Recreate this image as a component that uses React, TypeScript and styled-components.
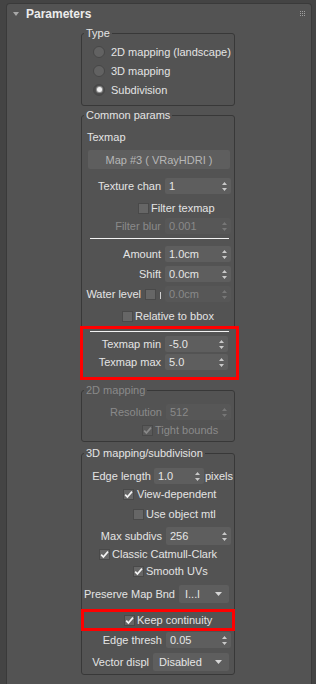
import styled, { createGlobalStyle } from "styled-components";

const GlobalStyle = createGlobalStyle`
  html, body {
    margin: 0;
    background: #444444;
  }
  body {
    font-family: "Liberation Sans", Arial, sans-serif;
    font-size: 11px;
    color: #e4e4e4;
    overflow: hidden;
  }
`;

const Panel = styled.div`
  box-sizing: border-box;
  margin: 3px 4px 0 6px;
  height: 681px;
  background: #535353;
  border: 1px solid #3a3a3a;
  border-bottom: none;
  border-radius: 4px 4px 0 0;
  overflow: hidden;
`;

const Header = styled.div`
  display: flex;
  align-items: center;
  height: 20px;
  padding: 0 6px;
`;

const Title = styled.span`
  margin-left: 7px;
  font-size: 12px;
  font-weight: 700;
  color: #ececec;
`;

const Grip = styled.svg`
  margin-left: auto;
  margin-top: -1px;
`;

const Group = styled.fieldset<{ $mt: number; $pb?: number }>`
  box-sizing: border-box;
  width: 154px;
  min-width: 0;
  margin: ${(p) => p.$mt}px 0 0 74px;
  padding: 0 0 ${(p) => p.$pb ?? 0}px 0;
  border: 1px solid #383838;
  border-radius: 3px;
`;

const Legend = styled.legend<{ $dim?: boolean }>`
  margin-left: 2px;
  padding: 0 2px;
  line-height: 14px;
  color: ${(p) => (p.$dim ? "#8a8a8a" : "#e4e4e4")};
`;

const Row = styled.div<{
  $h?: number;
  $mt?: number;
  $pl?: number;
  $pr?: number;
  $end?: boolean;
  $gap?: number;
}>`
  display: flex;
  align-items: center;
  justify-content: ${(p) => (p.$end ? "flex-end" : "flex-start")};
  gap: ${(p) => p.$gap ?? 4}px;
  height: ${(p) => p.$h ?? 20}px;
  margin-top: ${(p) => p.$mt ?? 0}px;
  padding: 0 ${(p) => p.$pr ?? 3}px 0 ${(p) => p.$pl ?? 0}px;
  white-space: nowrap;
  overflow: hidden;
`;

const Label = styled.span<{ $dim?: boolean }>`
  color: ${(p) => (p.$dim ? "#8a8a8a" : "#e4e4e4")};
`;

const Field = styled.div<{ $w: number; $h?: number; $dim?: boolean }>`
  box-sizing: border-box;
  display: flex;
  align-items: center;
  flex: none;
  width: ${(p) => p.$w}px;
  height: ${(p) => p.$h ?? 16}px;
  padding: 0 4px 0 4px;
  background: ${(p) => (p.$dim ? "#575757" : "#5e5e5e")};
  color: ${(p) => (p.$dim ? "#898989" : "#e6e6e6")};
  border-radius: 2px;
`;

const FieldText = styled.span`
  flex: 1;
  overflow: hidden;
`;

const MapButton = styled.div`
  display: flex;
  align-items: center;
  justify-content: center;
  height: 19px;
  margin: 3px 4px 0 6px;
  background: #5e5e5e;
  color: #b6b6b6;
  border-radius: 2px;
`;

const Separator = styled.div<{ $mt: number; $ml: number; $mr: number }>`
  height: 1px;
  margin: ${(p) => p.$mt}px ${(p) => p.$mr}px 0 ${(p) => p.$ml}px;
  background: #f2f2f2;
`;

const Highlight = styled.div<{ $mt: number; $ml: number; $mr: number; $mb: number; $pb?: number }>`
  position: relative;
  margin: ${(p) => p.$mt}px ${(p) => p.$mr}px ${(p) => p.$mb}px ${(p) => p.$ml}px;
  padding-bottom: ${(p) => p.$pb ?? 0}px;
  border: 3px solid #ff0000;
  background: #535353;
`;

const Box = styled.span<{ $dim?: boolean }>`
  box-sizing: border-box;
  display: flex;
  align-items: center;
  justify-content: center;
  flex: none;
  width: 11px;
  height: 11px;
  background: ${(p) => (p.$dim ? "#5a5a5a" : "#666666")};
  border: 1px solid #494949;
`;

const RadioDot = styled.span<{ $on?: boolean }>`
  box-sizing: border-box;
  display: flex;
  align-items: center;
  justify-content: center;
  flex: none;
  width: 12px;
  height: 12px;
  border-radius: 50%;
  background: ${(p) => (p.$on ? "#4a4a4a" : "#626262")};
  border: 1px solid #474747;

  &::after {
    content: "";
    display: ${(p) => (p.$on ? "block" : "none")};
    width: 5px;
    height: 5px;
    border-radius: 50%;
    background: #f0f0f0;
    box-shadow: 0 0 1px 1px #9a9a9a;
  }
`;

const Tick = styled.span`
  flex: none;
  width: 1px;
  height: 7px;
  margin-top: 3px;
  background: #d0d0d0;
`;

const Spinner = ({ value, w = 66, h, dim }: { value: string; w?: number; h?: number; dim?: boolean }) => (
  <Field $w={w} $h={h} $dim={dim}>
    <FieldText>{value}</FieldText>
    <svg width="5" height="9" viewBox="0 0 5 9">
      <path d="M2.5 0 L5 3 L0 3 Z M0 6 L5 6 L2.5 9 Z" fill={dim ? "#777" : "#c9c9c9"} />
    </svg>
  </Field>
);

const Dropdown = ({ value, w }: { value: string; w: number }) => (
  <Field $w={w} $h={18}>
    <FieldText style={{ paddingLeft: 2 }}>{value}</FieldText>
    <svg width="7" height="4" viewBox="0 0 7 4" style={{ marginRight: 3 }}>
      <path d="M0 0 L7 0 L3.5 4 Z" fill="#d6d6d6" />
    </svg>
  </Field>
);

const Check = ({ on, dim }: { on?: boolean; dim?: boolean }) => (
  <Box $dim={dim}>
    {on && (
      <svg width="9" height="9" viewBox="0 0 9 9">
        <path d="M1.2 4.6 L3.4 7 L8 1.6" fill="none" stroke={dim ? "#8a8a8a" : "#f4f4f4"} strokeWidth="1.7" />
      </svg>
    )}
  </Box>
);

export default function App() {
  return (
    <>
      <GlobalStyle />
      <Panel>
        <Header>
          <svg width="6" height="4" viewBox="0 0 6 4">
            <path d="M0 0 L6 0 L3 4 Z" fill="#a8a8a8" />
          </svg>
          <Title>Parameters</Title>
          <Grip width="5" height="5" viewBox="0 0 5 5">
            {[0, 2, 4].map((y) =>
              [0, 2, 4].map((x) => <rect key={`${x}-${y}`} x={x} y={y} width="1" height="1" fill="#a0a0a0" />)
            )}
          </Grip>
        </Header>

        <Group $mt={2} $pb={6}>
          <Legend>Type</Legend>
          <Row $h={19} $mt={2} $pl={11} $gap={6}>
            <RadioDot />
            <Label>2D mapping (landscape)</Label>
          </Row>
          <Row $h={19} $pl={11} $gap={6}>
            <RadioDot />
            <Label>3D mapping</Label>
          </Row>
          <Row $h={19} $pl={11} $gap={6}>
            <RadioDot $on />
            <Label>Subdivision</Label>
          </Row>
        </Group>

        <Group $mt={2}>
          <Legend>Common params</Legend>
          <Row $mt={5} $pl={5}>
            <Label>Texmap</Label>
          </Row>
          <MapButton>Map #3 ( VRayHDRI )</MapButton>
          <Row $end $mt={7}>
            <Label>Texture chan</Label>
            <Spinner value="1" />
          </Row>
          <Row $mt={2} $pl={56} $gap={2}>
            <Check />
            <Label>Filter texmap</Label>
          </Row>
          <Row $end $h={16}>
            <Label $dim>Filter blur</Label>
            <Spinner value="0.001" dim />
          </Row>
          <Separator $mt={4} $ml={8} $mr={5} />
          <Row $end $mt={5}>
            <Label>Amount</Label>
            <Spinner value="1.0cm" />
          </Row>
          <Row $end>
            <Label>Shift</Label>
            <Spinner value="0.0cm" />
          </Row>
          <Row $end>
            <Label>Water level</Label>
            <Check />
            <Tick />
            <Spinner value="0.0cm" dim />
          </Row>
          <Row $h={18} $mt={3} $pl={40} $gap={2}>
            <Check />
            <Label>Relative to bbox</Label>
          </Row>
          <Highlight $mt={1} $ml={-2} $mr={-5} $mb={-5} $pb={6}>
            <Separator $mt={2} $ml={7} $mr={7} />
            <Row $end $h={18} $mt={3} $pr={8}>
              <Label>Texmap min</Label>
              <Spinner value="-5.0" w={63} />
            </Row>
            <Row $end $h={18} $pr={8}>
              <Label>Texmap max</Label>
              <Spinner value="5.0" w={63} />
            </Row>
          </Highlight>
        </Group>

        <Group $mt={7} $pb={3}>
          <Legend $dim>2D mapping</Legend>
          <Row $end $mt={5}>
            <Label $dim>Resolution</Label>
            <Spinner value="512" w={65} dim />
          </Row>
          <Row $h={16} $pl={60} $gap={2}>
            <Check on dim />
            <Label $dim>Tight bounds</Label>
          </Row>
        </Group>

        <Group $mt={4} $pb={2}>
          <Legend>3D mapping/subdivision</Legend>
          <Row $end $mt={6} $pr={1} $gap={3}>
            <Label>Edge length</Label>
            <Spinner value="1.0" w={50} />
            <Label style={{ marginLeft: -2 }}>pixels</Label>
          </Row>
          <Row $h={16} $pl={41} $gap={3}>
            <Check on />
            <Label>View-dependent</Label>
          </Row>
          <Row $mt={2} $pl={51} $gap={2}>
            <Check />
            <Label>Use object mtl</Label>
          </Row>
          <Row $end $mt={2}>
            <Label>Max subdivs</Label>
            <Spinner value="256" w={65} h={18} />
          </Row>
          <Row $h={16} $pl={17} $gap={2}>
            <Check on />
            <Label>Classic Catmull-Clark</Label>
          </Row>
          <Row $h={18} $pl={51} $gap={2}>
            <Check on />
            <Label>Smooth UVs</Label>
          </Row>
          <Row $end $mt={4} $pr={5}>
            <Label>Preserve Map Bnd</Label>
            <Dropdown value="I...l" w={50} />
          </Row>
          <Highlight $mt={5} $ml={-1} $mr={-1} $mb={0}>
            <Row $h={16} $pl={40} $gap={2}>
              <Check on />
              <Label>Keep continuity</Label>
            </Row>
          </Highlight>
          <Row $end $h={18}>
            <Label>Edge thresh</Label>
            <Spinner value="0.05" w={65} />
          </Row>
          <Row $end $mt={3} $pr={5}>
            <Label>Vector displ</Label>
            <Dropdown value="Disabled" w={76} />
          </Row>
        </Group>
      </Panel>
    </>
  );
}
